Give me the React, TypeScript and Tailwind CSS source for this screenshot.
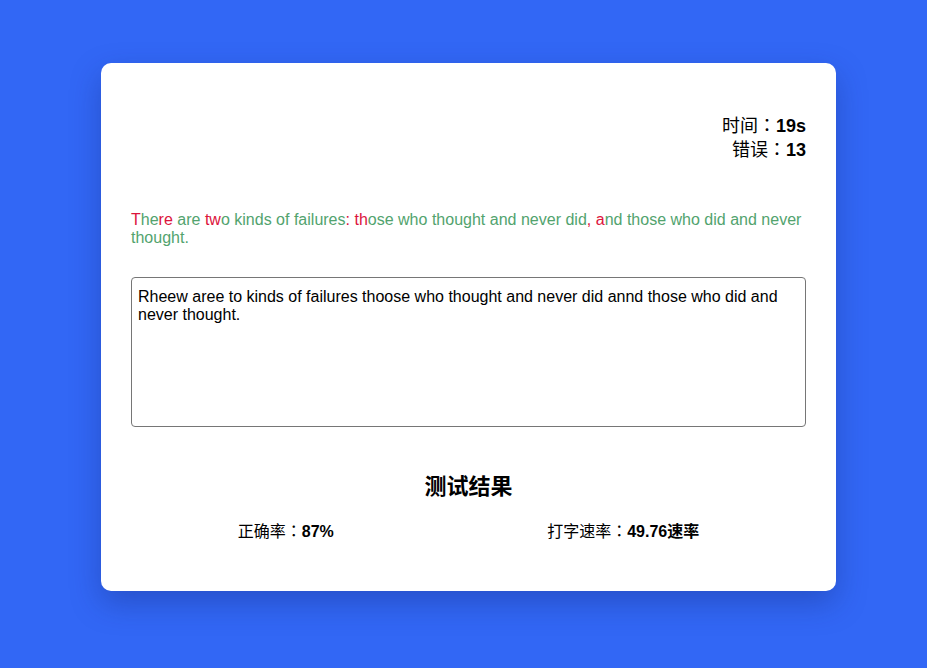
import clsx from "clsx";

const quote = "There are two kinds of failures: those who thought and never did, and those who did and never thought.";
const typed = "Rheew aree to kinds of failures thoose who thought and never did annd those who did and never thought.";

// fullwidth colon, centred as in the reference
function Colon() {
    return <span className="inline-block leading-none font-['Noto_Sans_CJK_TC',sans-serif]">：</span>;
}

export default function App() {
    const errors = quote.split('').filter((ch, i) => typed[i] !== ch).length;

    return (
        <div className="min-h-screen w-full bg-[#3267f5] pl-[101px] pt-[63px] font-['Liberation_Sans','Noto_Sans_CJK_SC',sans-serif] text-black">
            <div className="w-[735px] rounded-[10px] bg-white px-[30px] pt-[51px] pb-[50px] shadow-[0_12px_30px_rgba(20,40,120,0.35)]">
                <section className="flex flex-col items-end text-[18px] leading-[24px]">
                    <span>时间<Colon /><b>19s</b></span>
                    <span>错误<Colon /><b>{errors}</b></span>
                </section>
                <p className="mt-[49px] text-[16px] leading-[18px]">
                    {quote.split('').map((ch, i) => (
                        <span key={i} className={clsx(typed[i] === ch ? 'text-[#52a36e]' : 'text-[#dc143c]')}>
                            {ch}
                        </span>
                    ))}
                </p>
                <textarea
                    readOnly
                    defaultValue={typed}
                    className="mt-[30px] block h-[150px] w-full resize-none rounded-[4px] border border-[#767676] px-[6px] pt-[10px] text-[16px] leading-[18px] outline-none"
                />
                <h2 className="mt-[47px] text-center text-[22px] leading-[26px] font-bold">测试结果</h2>
                <section className="mt-[22px] flex justify-around text-[16px] leading-[18px]">
                    <span>正确率<Colon /><b>87%</b></span>
                    <span>打字速率<Colon /><b>49.76速率</b></span>
                </section>
            </div>
        </div>
    );
}
